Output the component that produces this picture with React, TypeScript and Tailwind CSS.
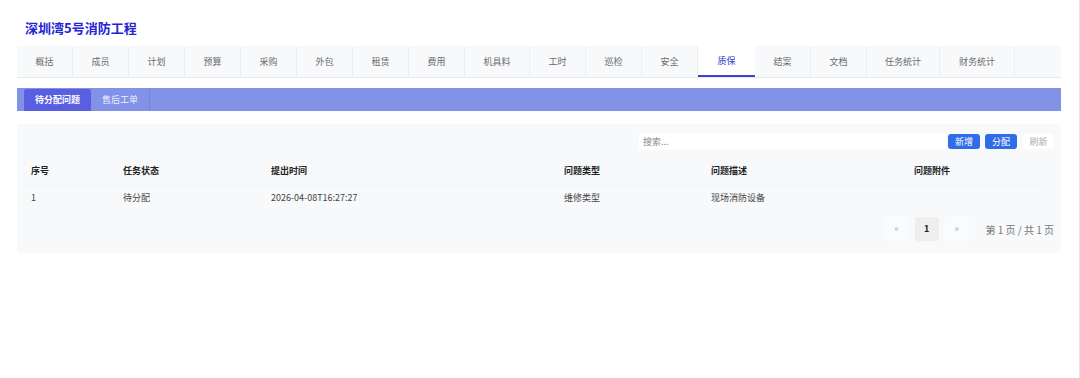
import React, { useState } from "react";

const tabs: { label: string; w: number }[] = [
  { label: "概括", w: 56 },
  { label: "成员", w: 56 },
  { label: "计划", w: 56 },
  { label: "预算", w: 56 },
  { label: "采购", w: 56 },
  { label: "外包", w: 56 },
  { label: "租赁", w: 56 },
  { label: "费用", w: 56 },
  { label: "机具料", w: 65 },
  { label: "工时", w: 56 },
  { label: "巡检", w: 56 },
  { label: "安全", w: 56 },
  { label: "质保", w: 57 },
  { label: "结案", w: 56 },
  { label: "文档", w: 56 },
  { label: "任务统计", w: 73 },
  { label: "财务统计", w: 75 },
];

const columns: { label: string; w: number }[] = [
  { label: "序号", w: 92 },
  { label: "任务状态", w: 148 },
  { label: "提出时间", w: 293 },
  { label: "问题类型", w: 147 },
  { label: "问题描述", w: 203 },
  { label: "问题附件", w: 140 },
];

const rows = [["1", "待分配", "2026-04-08T16:27:27", "维修类型", "现场消防设备", ""]];

const App: React.FC = () => {
  const [activeTab, setActiveTab] = useState<string>("质保");
  const [subTab, setSubTab] = useState<string>("待分配问题");

  return (
    <div
      className="h-[378px] w-[1080px] overflow-hidden bg-white border-r border-gray-200"
      style={{ fontFamily: '"Noto Sans CJK SC", "Noto Sans", sans-serif' }}
    >
      <div className="pl-[17px] pr-[18px]">
        <h1 className="pl-2 pt-[19px] h-[46px] text-[13px] font-bold leading-[18px] text-[#2424d4]">深圳湾5号消防工程</h1>

        {/* main tabs */}
        <div className="flex h-[32px] border-b border-[#e6e8eb] bg-[#f8f9fa]">
          {tabs.map((t) => {
            const active = t.label === activeTab;
            return (
              <button
                key={t.label}
                onClick={() => setActiveTab(t.label)}
                style={{ width: t.w }}
                className={
                  active
                    ? "h-full shrink-0 border-b-2 border-[#3b45d0] bg-white text-[9px] text-[#2f3acb]"
                    : "h-full shrink-0 border-r border-[#eceef0] text-[9px] text-[#6b6b6b]"
                }
              >
                {t.label}
              </button>
            );
          })}
          <div className="flex-1" />
        </div>

        {/* sub tabs */}
        <div className="mt-[10px] flex h-[23px] bg-[#8292e7] pl-[7px] pt-[1px]">
          {["待分配问题", "售后工单"].map((s) => {
            const active = s === subTab;
            return (
              <button
                key={s}
                onClick={() => setSubTab(s)}
                className={
                  active
                    ? "h-full w-[67px] rounded-t-[3px] bg-[#5a5ee1] text-[9px] font-bold text-white"
                    : "h-full w-[59px] border-r border-[#7383d6] text-[9px] text-[#eef0ff]"
                }
              >
                {s}
              </button>
            );
          })}
        </div>

        {/* content card */}
        <div className="mt-[13px] h-[129px] rounded-[2px] bg-[#f8f9fb] px-[7px] pt-[9px]">
          <div className="flex h-[17px] items-center justify-end">
            <input
              placeholder="搜索..."
              className="h-[17px] w-[307px] rounded-[2px] bg-white px-[4px] text-[9px] text-[#333] placeholder:text-[#888] outline-none"
            />
            <button className="ml-[2px] h-[15px] w-[32px] rounded-[3px] bg-[#2f6de8] text-[9px] text-white">新增</button>
            <button className="ml-[5px] h-[15px] w-[32px] rounded-[3px] bg-[#2f6de8] text-[9px] text-white">分配</button>
            <button className="ml-[6px] h-[15px] w-[31px] rounded-[3px] bg-white text-[9px] text-[#aaa]">刷新</button>
          </div>

          <table className="mt-[7px] table-fixed border-collapse text-left">
            <thead>
              <tr className="h-[27px]">
                {columns.map((c) => (
                  <th key={c.label} style={{ width: c.w }} className="pl-[7px] text-[9px] font-bold text-[#222]">
                    {c.label}
                  </th>
                ))}
              </tr>
            </thead>
            <tbody>
              {rows.map((r) => (
                <tr key={r[0]} className="h-[27px] border-t border-[#f4f5f7]">
                  {r.map((cell, i) => (
                    <td key={i} className="pl-[7px] text-[9px] text-[#444]">
                      {cell}
                    </td>
                  ))}
                </tr>
              ))}
            </tbody>
          </table>

          <div className="mt-[6px] flex h-[24px] items-center justify-end text-[9px]">
            <button className="h-[24px] w-[24px] rounded-[3px] bg-[#fafbfc] text-[#aaa]">«</button>
            <button className="ml-[6px] h-[24px] w-[24px] rounded-[3px] bg-[#eeeeef] font-bold text-[#222]">1</button>
            <button className="ml-[6px] h-[24px] w-[24px] rounded-[3px] bg-[#fafbfc] text-[#aaa]">»</button>
            <span className="ml-[17px] text-[10px] text-[#777]">第 1 页 / 共 1 页</span>
          </div>
        </div>
      </div>
    </div>
  );
};

export default App;
